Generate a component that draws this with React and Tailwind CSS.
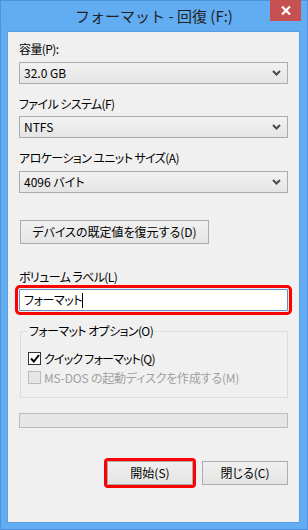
import React from 'react';

const font = { fontFamily: '"Noto Sans CJK JP", "Noto Sans", sans-serif' };

function Chevron() {
  return (
    <svg width="9" height="6" viewBox="0 0 9 6" className="shrink-0">
      <path d="M1 1 L4.5 4.5 L8 1" fill="none" stroke="#4a4a4a" strokeWidth="2" />
    </svg>
  );
}

function Select({ value, className = '' }) {
  return (
    <div className={`flex h-[22px] items-center justify-between border border-[#acacac] bg-gradient-to-b from-[#f2f2f2] to-[#e5e5e5] pl-[4px] pr-[6px] ${className}`}>
      <span className="text-[12px] leading-[14px] text-black">{value}</span>
      <Chevron />
    </div>
  );
}

function Label({ children, className = '' }) {
  return <div className={`h-[16px] text-[12px] leading-[16px] tracking-[-0.6px] text-black ${className}`}>{children}</div>;
}

function Button({ children, className = '' }) {
  return (
    <button className={`flex h-[24px] items-center justify-center border border-[#acacac] bg-gradient-to-b from-[#f0f0f0] to-[#e5e5e5] text-[12px] leading-[14px] text-black ${className}`}>
      {children}
    </button>
  );
}

export default function App() {
  return (
    <div style={font} className="flex h-[530px] w-[308px] flex-col border border-[#4b93da] bg-[#62acf2] [font-feature-settings:'palt']">
      <div className="relative flex h-[30px] shrink-0 items-center justify-center">
        <span className="pb-[1px] text-[15px] leading-[18px] text-[#222] [font-feature-settings:normal]">フォーマット - 回復 (F:)</span>
        <div className="absolute right-[6px] top-[-1px] flex h-[21px] w-[31px] items-center justify-center bg-[#c75050]">
          <svg width="10" height="9" viewBox="0 0 10 9">
            <path d="M1 0.5 L9 8.5 M9 0.5 L1 8.5" stroke="#fff" strokeWidth="2.2" />
          </svg>
        </div>
      </div>

      <div className="ml-[6px] mr-[7px] flex h-[492px] flex-col border border-[#5a9ee0] bg-[#f0f0f0] px-[11px]">
        <Label className="mt-[9px]">容量(P):</Label>
        <Select value="32.0 GB" className="mt-[5px]" />

        <Label className="mt-[12px]">ファイル システム(F)</Label>
        <Select value="NTFS" className="mt-[4px]" />

        <Label className="mt-[12px]">アロケーション ユニット サイズ(A)</Label>
        <Select value="4096 バイト" className="mt-[5px]" />

        <Button className="ml-[1px] mt-[27px] w-[189px]">デバイスの既定値を復元する(D)</Button>

        <Label className="mt-[25px]">ボリューム ラベル(L)</Label>
        <div className="mt-[4px] flex h-[22px] items-center rounded-[1px] border border-[#5c8fc4] bg-white pl-[4px] outline outline-[3px] outline-offset-[1px] outline-[#ff0000]">
          <span className="text-[12px] leading-[14px] tracking-[-0.4px] text-black">フォーマット</span>
          <span className="h-[15px] w-[1px] bg-black" />
        </div>

        <fieldset className="ml-[1px] mt-[12px] border border-[#dcdcdc] px-[7px] pb-[10px]">
          <legend className="px-[1px] text-[12px] leading-[16px] tracking-[-0.6px] text-black">フォーマット オプション(O)</legend>
          <div className="mt-[10px] flex h-[19px] items-center">
            <div className="flex h-[13px] w-[13px] items-center justify-center border border-[#333] bg-white">
              <svg width="10" height="9" viewBox="0 0 10 9">
                <path d="M1 4.5 L3.8 7.5 L9 1" fill="none" stroke="#000" strokeWidth="2" />
              </svg>
            </div>
            <span className="ml-[3px] text-[12px] leading-[14px] tracking-[-0.8px] text-black">クイック フォーマット(Q)</span>
          </div>
          <div className="flex h-[19px] items-center">
            <div className="h-[13px] w-[13px] border border-[#bcbcbc] bg-[#e6e6e6]" />
            <span className="ml-[3px] text-[12px] leading-[14px] tracking-[-0.2px] text-[#a0a0a0]">MS-DOS の起動ディスクを作成する(M)</span>
          </div>
        </fieldset>

        <div className="mt-[15px] h-[15px] border border-[#bcbcbc] bg-[#e6e6e6]" />

        <div className="mt-[33px] flex justify-end gap-[9px]">
          <Button className="w-[86px] rounded-[1px] outline outline-[3px] outline-offset-[0px] outline-[#ff0000]">開始(S)</Button>
          <Button className="w-[86px]">閉じる(C)</Button>
        </div>
      </div>
    </div>
  );
}
